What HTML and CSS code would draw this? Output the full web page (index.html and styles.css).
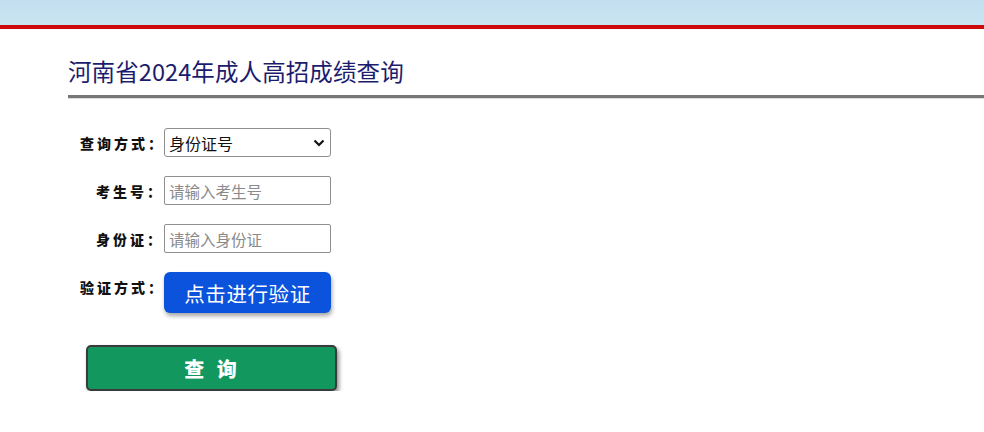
FILE: index.html
```html
<!DOCTYPE html>
<html lang="zh-CN">
<head>
<meta charset="utf-8">
<title>河南省2024年成人高招成绩查询</title>
<link rel="stylesheet" href="styles.css">
</head>
<body>
<div class="banner"></div>
<div class="main">
  <h1 class="title">河南省2024年成人高招成绩查询</h1>
  <div class="rule"></div>
  <form class="form">
    <div class="row">
      <label class="label">查询方式：</label>
      <div class="select-wrap">
        <select class="control select">
          <option>身份证号</option>
          <option>考生号</option>
        </select>
        <svg class="chev" width="12" height="8" viewBox="0 0 12 8"><path d="M1.5 1.5 L6 6 L10.5 1.5" fill="none" stroke="#111" stroke-width="2.2"/></svg>
      </div>
    </div>
    <div class="row">
      <label class="label">考生号：</label>
      <input class="control input" type="text" placeholder="请输入考生号">
    </div>
    <div class="row">
      <label class="label">身份证：</label>
      <input class="control input" type="text" placeholder="请输入身份证">
    </div>
    <div class="row row-top">
      <label class="label label-top">验证方式：</label>
      <button type="button" class="verify">点击进行验证</button>
    </div>
    <div class="submit-row">
      <button type="button" class="submit">查&nbsp;询</button>
    </div>
  </form>
</div>
</body>
</html>
```
FILE: styles.css
```css
html, body {
  margin: 0;
  padding: 0;
  background: #fff;
  font-family: "Noto Sans CJK SC", "Noto Sans", sans-serif;
}
.banner {
  height: 25px;
  background: linear-gradient(180deg, #c3def0 0%, #c9e5f2 100%);
  border-bottom: 4px solid #cc0a0a;
}
.main {
  padding-left: 68px;
}
.title {
  margin: 0;
  padding-top: 25px;
  height: 41px;
  font-size: 23.5px;
  font-weight: 400;
  color: #1c1c6e;
  line-height: 34px;
  letter-spacing: 0.1px;
}
.rule {
  height: 3px;
  background: #777;
  border-bottom: 1px solid #dcdcdc;
}
.form {
  padding-top: 29px;
  padding-left: 12px;
}
.row {
  display: flex;
  align-items: center;
  height: 29px;
  margin-bottom: 19px;
}
.row-top {
  align-items: flex-start;
  height: 41px;
}
.label {
  width: 84px;
  flex: none;
  text-align: right;
  font-size: 14px;
  font-weight: 900;
  color: #111;
  letter-spacing: 3px;
  white-space: nowrap;
}
.label-top {
  padding-top: 5px;
}
.control {
  box-sizing: border-box;
  width: 167px;
  height: 29px;
  border: 1px solid #8f8f8f;
  border-radius: 2px;
  font-family: "Noto Sans CJK SC", sans-serif;
  font-size: 15.5px;
  padding: 0 4px;
  background: #fff;
  color: #111;
  outline: none;
}
.input::placeholder {
  color: #8a8a8a;
}
.select-wrap {
  position: relative;
  width: 167px;
  height: 29px;
}
.select {
  appearance: none;
  -webkit-appearance: none;
  border-radius: 3px;
  padding-left: 4px;
  font-size: 16px;
}
.chev {
  position: absolute;
  right: 6px;
  top: 11px;
  pointer-events: none;
}
.verify {
  box-sizing: border-box;
  width: 167px;
  height: 41px;
  border: none;
  border-radius: 6px;
  background: #0b53dc;
  color: #fff;
  font-family: "Noto Sans CJK SC", sans-serif;
  font-size: 20.5px;
  letter-spacing: 0.6px;
  box-shadow: 1px 3px 4px rgba(0,0,0,0.35);
  padding: 0;
}
.submit-row {
  padding-left: 6px;
  padding-top: 13px;
}
.submit {
  box-sizing: border-box;
  width: 251px;
  height: 46px;
  border: 2px solid #3a3a3a;
  border-radius: 5px;
  background: #12975f;
  color: #fff;
  font-family: "Noto Sans CJK SC", sans-serif;
  font-size: 20px;
  font-weight: 900;
  letter-spacing: 4px;
  box-shadow: 2px 3px 4px rgba(0,0,0,0.45);
  padding: 0 0 0 2px;
}
```
